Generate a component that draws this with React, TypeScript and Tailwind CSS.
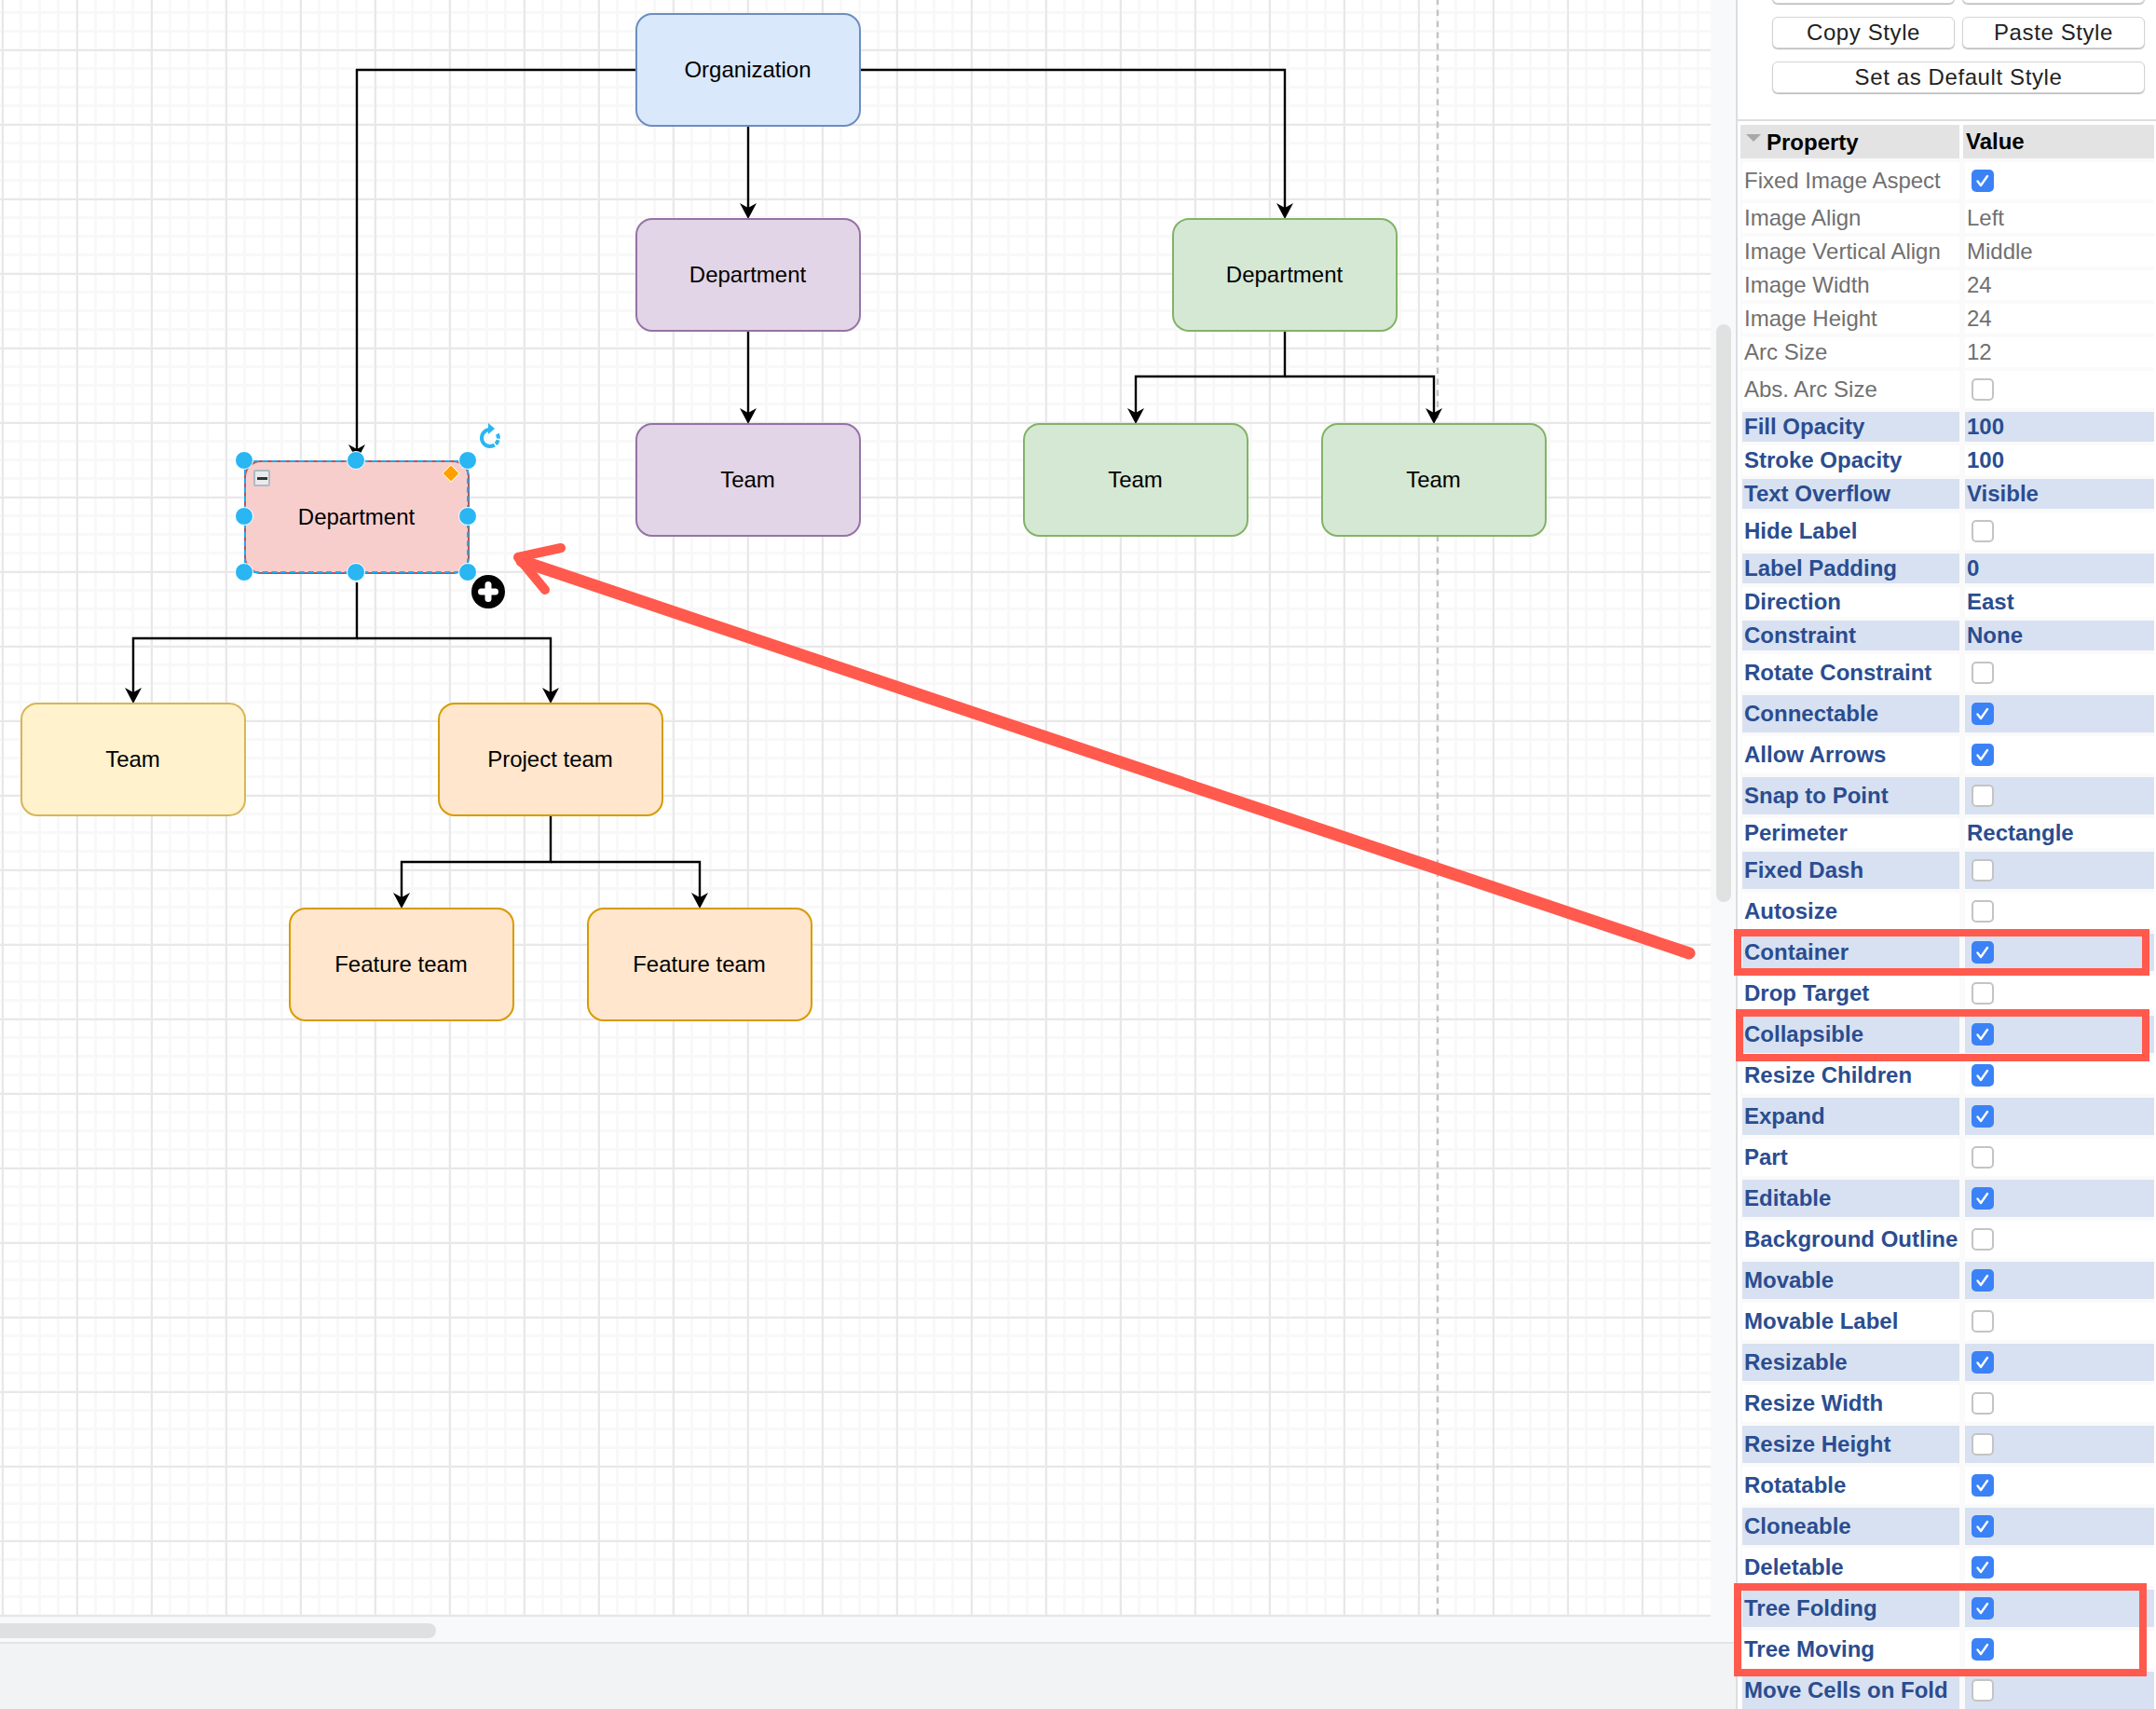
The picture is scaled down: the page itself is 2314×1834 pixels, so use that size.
type Row = { label: string; value?: string; checked?: boolean; changed?: boolean; shaded?: boolean };

// Property table, top to bottom. Rows without a value show a checkbox.
const rows: Row[] = [
  { label: 'Fixed Image Aspect', checked: true },
  { label: 'Image Align', value: 'Left' },
  { label: 'Image Vertical Align', value: 'Middle' },
  { label: 'Image Width', value: '24' },
  { label: 'Image Height', value: '24' },
  { label: 'Arc Size', value: '12' },
  { label: 'Abs. Arc Size', checked: false },
  { label: 'Fill Opacity', value: '100', changed: true, shaded: true },
  { label: 'Stroke Opacity', value: '100', changed: true },
  { label: 'Text Overflow', value: 'Visible', changed: true, shaded: true },
  { label: 'Hide Label', checked: false, changed: true },
  { label: 'Label Padding', value: '0', changed: true, shaded: true },
  { label: 'Direction', value: 'East', changed: true },
  { label: 'Constraint', value: 'None', changed: true, shaded: true },
  { label: 'Rotate Constraint', checked: false, changed: true },
  { label: 'Connectable', checked: true, changed: true, shaded: true },
  { label: 'Allow Arrows', checked: true, changed: true },
  { label: 'Snap to Point', checked: false, changed: true, shaded: true },
  { label: 'Perimeter', value: 'Rectangle', changed: true },
  { label: 'Fixed Dash', checked: false, changed: true, shaded: true },
  { label: 'Autosize', checked: false, changed: true },
  { label: 'Container', checked: true, changed: true, shaded: true },
  { label: 'Drop Target', checked: false, changed: true },
  { label: 'Collapsible', checked: true, changed: true, shaded: true },
  { label: 'Resize Children', checked: true, changed: true },
  { label: 'Expand', checked: true, changed: true, shaded: true },
  { label: 'Part', checked: false, changed: true },
  { label: 'Editable', checked: true, changed: true, shaded: true },
  { label: 'Background Outline', checked: false, changed: true },
  { label: 'Movable', checked: true, changed: true, shaded: true },
  { label: 'Movable Label', checked: false, changed: true },
  { label: 'Resizable', checked: true, changed: true, shaded: true },
  { label: 'Resize Width', checked: false, changed: true },
  { label: 'Resize Height', checked: false, changed: true, shaded: true },
  { label: 'Rotatable', checked: true, changed: true },
  { label: 'Cloneable', checked: true, changed: true, shaded: true },
  { label: 'Deletable', checked: true, changed: true },
  { label: 'Tree Folding', checked: true, changed: true, shaded: true },
  { label: 'Tree Moving', checked: true, changed: true },
  { label: 'Move Cells on Fold', checked: false, changed: true, shaded: true },
];

const nodes = [
  { text: 'Organization', pos: 'left-[682px] top-[14px]', tone: 'bg-[#dae8fc] border-[#6c8ebf]' },
  { text: 'Department', pos: 'left-[682px] top-[234px]', tone: 'bg-[#e1d5e7] border-[#9673a6]' },
  { text: 'Team', pos: 'left-[682px] top-[454px]', tone: 'bg-[#e1d5e7] border-[#9673a6]' },
  { text: 'Department', pos: 'left-[1258px] top-[234px]', tone: 'bg-[#d5e8d4] border-[#82b366]' },
  { text: 'Team', pos: 'left-[1098px] top-[454px]', tone: 'bg-[#d5e8d4] border-[#82b366]' },
  { text: 'Team', pos: 'left-[1418px] top-[454px]', tone: 'bg-[#d5e8d4] border-[#82b366]' },
  { text: 'Department', pos: 'left-[262px] top-[494px]', tone: 'bg-[#f8cecc] border-[#b85450]' },
  { text: 'Team', pos: 'left-[22px] top-[754px]', tone: 'bg-[#fff2cc] border-[#d6b656]' },
  { text: 'Project team', pos: 'left-[470px] top-[754px]', tone: 'bg-[#ffe6cc] border-[#d79b00]' },
  { text: 'Feature team', pos: 'left-[310px] top-[974px]', tone: 'bg-[#ffe6cc] border-[#d79b00]' },
  { text: 'Feature team', pos: 'left-[630px] top-[974px]', tone: 'bg-[#ffe6cc] border-[#d79b00]' },
];

const edges = [
  'M683 75H383V487',
  'M923 75H1379V226',
  'M803 135V226',
  'M803 355V446',
  'M1379 355V404H1219V446',
  'M1379 404H1539V446',
  'M383 625V685H143V746',
  'M383 685H591V746',
  'M591 875V925H431V966',
  'M591 925H751V966',
];

const arrowTips = [
  [383, 494],
  [1379, 235],
  [803, 235],
  [803, 455],
  [1219, 455],
  [1539, 455],
  [143, 755],
  [591, 755],
  [431, 975],
  [751, 975],
];

const handles = [
  [262, 494],
  [382, 494],
  [502, 494],
  [262, 554],
  [502, 554],
  [262, 614],
  [382, 614],
  [502, 614],
];

const highlights = [
  'left-[1861px] top-[997px] w-[446px] h-[50px]',
  'left-[1863px] top-[1083px] w-[444px] h-[56px]',
  'left-[1861px] top-[1699px] w-[443px] h-[100px]',
];

function Checkbox({ checked }: { checked: boolean }) {
  if (!checked) {
    return <span className="block h-6 w-6 rounded-[5px] border-2 border-[#c4c4c4] bg-white" />;
  }
  return (
    <span className="flex h-6 w-6 items-center justify-center rounded-[5px] bg-[#3b82f6]">
      <svg viewBox="0 0 24 24" className="h-6 w-6" fill="none" stroke="white" strokeWidth="2.4" strokeLinecap="round" strokeLinejoin="round">
        <path d="M6.5 12.5l3.5 4.5 7-10" />
      </svg>
    </span>
  );
}

function PropertyRow({ row }: { row: Row }) {
  const isCheck = row.value === undefined;
  const tone = row.shaded ? 'bg-[#d8e1f1]' : 'bg-white';
  const text = row.changed ? 'font-bold text-[#2a4d90]' : 'text-[#707070]';
  return (
    <div className={`flex gap-[6px] pl-[2px] ${isCheck ? 'h-10' : 'h-8'} ${text}`}>
      <div className={`flex w-[233px] items-center pl-[2px] whitespace-nowrap ${tone}`}>{row.label}</div>
      <div className={`flex w-[203px] items-center ${isCheck ? 'pl-[7px]' : 'pl-[2px]'} ${tone}`}>
        {isCheck ? <Checkbox checked={!!row.checked} /> : row.value}
      </div>
    </div>
  );
}

function StyleButton({ label, wide }: { label: string; wide?: boolean }) {
  return (
    <button className={`h-[34px] rounded-[6px] border border-[#d4d4d4] bg-white text-[24px] leading-none tracking-[0.6px] text-[#222] shadow-[0_1px_1px_#b8b8b8] ${wide ? 'w-[400px]' : 'w-[196px]'}`}>
      {label}
    </button>
  );
}

function Canvas() {
  return (
    <div className="relative h-[1735px] w-[1836px] overflow-hidden border-b-2 border-[#e6e6e6] bg-white bg-[linear-gradient(to_right,#e8e8e8_2px,transparent_2px),linear-gradient(to_bottom,#e8e8e8_2px,transparent_2px),linear-gradient(to_right,#f8f8f8_3px,transparent_3px),linear-gradient(to_bottom,#f8f8f8_3px,transparent_3px)] bg-[size:80px_80px,80px_80px,20px_20px,20px_20px] bg-[position:2px_53px,2px_53px,1px_12px,1px_12px]">
      <svg className="absolute left-0 top-0" width="1836" height="1735" fill="none">
        <line x1="1543" y1="-1.5" x2="1543" y2="1735" stroke="#c4c4c4" strokeWidth="2.4" strokeDasharray="6.5 5.5" />
        {edges.map((d) => (
          <path key={d} d={d} stroke="black" strokeWidth="2.4" />
        ))}
        {arrowTips.map(([x, y]) => (
          <path key={`${x}-${y}`} d={`M${x} ${y}l-9-17 9 5 9-5z`} fill="black" />
        ))}
      </svg>

      {nodes.map((node, i) => (
        <div
          key={i}
          className={`absolute flex h-[122px] w-[242px] items-center justify-center rounded-[18px] border-2 pb-px pr-px text-[24px] text-black ${node.pos} ${node.tone}`}
        >
          {node.text}
        </div>
      ))}

      {/* selection around the red department */}
      <div className="absolute left-[262px] top-[494px] h-[121px] w-[241px] border-2 border-dashed border-[#1eaaf1]" />
      {handles.map(([x, y]) => (
        <span
          key={`${x}-${y}`}
          className="absolute h-5 w-5 -translate-x-1/2 -translate-y-1/2 rounded-full border border-white bg-[#29b6f2]"
          style={{ left: x, top: y }}
        />
      ))}
      <span className="absolute left-[272px] top-[504px] flex h-[18px] w-[18px] items-center justify-center rounded-[2px] border-2 border-[#aebcc4] bg-[#e8eaec]">
        <span className="h-[3px] w-[11px] bg-[#333]" />
      </span>
      <span className="absolute left-[477px] top-[501px] h-[14px] w-[14px] rotate-45 border border-white bg-[#ff9f00]" />
      <svg className="absolute left-[511px] top-[452px]" width="30" height="30" viewBox="0 0 30 30" fill="none" stroke="#29b6f2" strokeWidth="4">
        <path d="M15 9A9 9 0 0 0 15 27" />
        <path d="M15 27A9 9 0 0 0 22 12.5" strokeDasharray="5 1.6" />
        <path d="M13 2L20 8 13 14z" fill="#29b6f2" stroke="none" />
      </svg>
      <span className="absolute left-[506px] top-[617px] flex h-9 w-9 items-center justify-center rounded-full bg-black">
        <svg width="26" height="26" viewBox="0 0 26 26" stroke="white" strokeWidth="7" strokeLinecap="round">
          <path d="M13 5.5V20.5M5.5 13H20.5" />
        </svg>
      </span>
    </div>
  );
}

export default function App() {
  return (
    <div className="relative flex h-[1834px] w-[2314px] overflow-hidden bg-white font-['Liberation_Sans',Arial,sans-serif]">
      {/* Left: canvas, scroll tracks, footer */}
      <div className="flex w-[1863px] flex-col bg-[#f1f3f5]">
        <div className="flex h-[1735px]">
          <Canvas />
          <div className="w-[27px] bg-[#f8f9fb] pl-[6px] pt-[348px]">
            <div className="h-[620px] w-4 rounded-lg bg-[#e0e2e1]" />
          </div>
        </div>
        <div className="h-[27px] bg-[#f8f9fb] pt-[7px]">
          <div className="h-4 w-[468px] rounded-r-lg bg-[#dfe1e0]" />
        </div>
        <div className="flex-1 border-t-2 border-[#e3e4e6]" />
      </div>

      {/* Right: style panel */}
      <div className="w-[451px] border-l-2 border-[#dcdde0] text-[24px] leading-none">
        <div className="flex h-[130px] flex-col gap-[14px] border-b-2 border-[#dcdde0] pl-[37px]">
          <div className="-mt-[30px] flex gap-2">
            <StyleButton label="Edit Style" />
            <StyleButton label="Edit Image" />
          </div>
          <div className="flex gap-2">
            <StyleButton label="Copy Style" />
            <StyleButton label="Paste Style" />
          </div>
          <StyleButton label="Set as Default Style" wide />
        </div>

        <div className="ml-[3px] mt-1 flex w-[444px] flex-col gap-1 bg-[#fafafa]">
          <div className="flex h-9 gap-1 bg-white font-bold text-black">
            <div className="relative flex w-[235px] items-center bg-[#e3e3e3] pl-[28px] pt-[2px]">
              <span className="absolute left-[6px] top-[10px] h-0 w-0 border-x-[8px] border-t-[8px] border-x-transparent border-t-[#a8a8a8]" />
              Property
            </div>
            <div className="flex w-[205px] items-center bg-[#e3e3e3] pl-[3px]">Value</div>
          </div>
          {rows.map((row) => (
            <PropertyRow key={row.label} row={row} />
          ))}
        </div>
      </div>

      {/* Red annotation over the page */}
      <svg className="pointer-events-none absolute left-0 top-0" width="2314" height="1834" fill="none" stroke="#ff5a4d" strokeLinecap="round" strokeLinejoin="round">
        <path d="M1813 1023L560 602" strokeWidth="13" />
        <path d="M602 588L556 598 585 633" strokeWidth="10" />
      </svg>
      {highlights.map((pos) => (
        <div key={pos} className={`pointer-events-none absolute border-[8px] border-[#ff5a4d] ${pos}`} />
      ))}
    </div>
  );
}
